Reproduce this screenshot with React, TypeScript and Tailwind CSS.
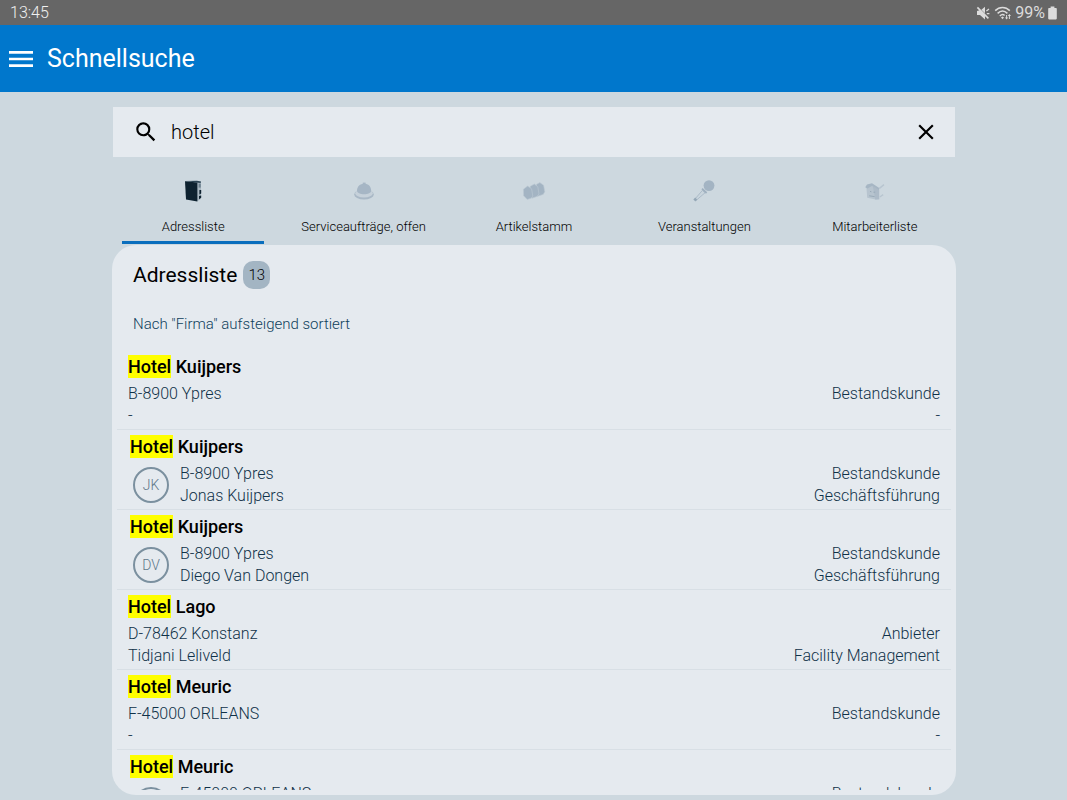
import { useState, type ReactNode } from "react";
import { MdClose, MdMenu, MdSearch } from "react-icons/md";

type Entry = {
  name: string;
  place: string;
  contact: string;
  status: string;
  role: string;
  avatar?: boolean;
  initials?: string;
};

const entries: Entry[] = [
  { name: "Kuijpers", place: "B-8900 Ypres", contact: "-", status: "Bestandskunde", role: "-" },
  {
    name: "Kuijpers",
    place: "B-8900 Ypres",
    contact: "Jonas Kuijpers",
    status: "Bestandskunde",
    role: "Geschäftsführung",
    avatar: true,
    initials: "JK",
  },
  {
    name: "Kuijpers",
    place: "B-8900 Ypres",
    contact: "Diego Van Dongen",
    status: "Bestandskunde",
    role: "Geschäftsführung",
    avatar: true,
    initials: "DV",
  },
  {
    name: "Lago",
    place: "D-78462 Konstanz",
    contact: "Tidjani Leliveld",
    status: "Anbieter",
    role: "Facility Management",
  },
  { name: "Meuric", place: "F-45000 ORLEANS", contact: "-", status: "Bestandskunde", role: "-" },
  {
    name: "Meuric",
    place: "F-45000 ORLEANS",
    contact: "",
    status: "Bestandskunde",
    role: "",
    avatar: true,
  },
];

function BinderIcon() {
  return (
    <svg viewBox="0 0 24 24" className="size-6">
      <path d="M4 2.2 16 2l4 .8v17L16 22.4z" fill="#a9b8c2" />
      <path d="M4 2.2 16.4 3.400v19L5 20.4z" fill="#0e2230" />
      <path d="M4.600 2 16 1.800l4 .8-.4 1.400-4.200-.4z" fill="#2c4454" />
      <path d="M18.400 11h1.800v3.600l-1.800.8zM18 17l2.200-.6v2.400L18 20.200z" fill="#0e2230" />
      <path d="M17.600 4.600h2.200v4h-2.200z" fill="#6f8290" />
    </svg>
  );
}

function BellIcon() {
  return (
    <svg viewBox="0 0 24 24" className="size-6">
      <ellipse cx="12" cy="15.4" rx="9.8" ry="5.2" fill="#a9b8c6" />
      <ellipse cx="12" cy="14.2" rx="8.800" ry="4.400" fill="#c6d1da" />
      <path d="M5 11.600C5.200 7.200 8 4.800 12.200 4.800S19 7.200 19.200 11.600c.2 5-14.200 5-14.200 0z" fill="#a6b6c5" />
      <path d="M10.800 3.600h2.800v2h-2.800z" fill="#a6b6c5" />
    </svg>
  );
}

function PartsIcon() {
  return (
    <svg viewBox="0 0 24 24" className="size-6">
      <g fill="#a3b4c3" stroke="#bcc9d3" strokeWidth=".6">
        <path d="m14.4 5.400 3.400-1.800 3.800 2.600 1.200 6.600-1.600 2.600-6 2z" />
        <path d="m8 7.400 4.400-2.400 3.400 2.800 1.200 7.200-2 2.400-5 1.800z" />
        <path d="m1.400 10.200 4.200-3.200 4 2.800 1.200 7.400-1.600 2-4 1.200-3.600-3.600z" />
      </g>
    </svg>
  );
}

function MicIcon() {
  return (
    <svg viewBox="0 0 24 24" className="size-6">
      <circle cx="17" cy="6.600" r="5.400" fill="#a3b4c3" />
      <path d="m10 9.600 4.600 4.400" stroke="#9fb0bf" strokeWidth="1.800" />
      <path d="m10.400 11.400 2.600 2.400-8.600 7.400-1.400-1.200z" fill="#c9d5dd" stroke="#a3b4c3" strokeWidth=".8" />
      <path d="m1.400 20.600 1.800-2 2 2-1.800 2z" fill="#94a7b6" />
    </svg>
  );
}

function HouseIcon() {
  return (
    <svg viewBox="0 0 24 24" className="size-6">
      <path d="M3.400 7.800 9.400 6l6.400 3.400.4 10.800-3.600.4-8.400-1.800z" fill="#b7c4cf" />
      <path d="m9.400 6 6.800 4.400v9.800l-4 .2L10.800 12z" fill="#adbbc8" />
      <path d="M2.200 8.200 4 5.400l5-1.200 7.600 5-.8 1.600-6.600-4-4.600 2.800z" fill="#a6b6c4" />
      <path d="m16.400 9.400 4.600-3.800M16.800 18l3.400-2.400" stroke="#b8c5d0" strokeWidth="1.400" />
      <path d="m6.200 16.800 5.400.8M7 12.400l1.400.4M10.400 13.200h1.800" stroke="#99aab8" strokeWidth="1" />
    </svg>
  );
}

const tabs: { label: string; icon: ReactNode }[] = [
  { label: "Adressliste", icon: <BinderIcon /> },
  { label: "Serviceaufträge, offen", icon: <BellIcon /> },
  { label: "Artikelstamm", icon: <PartsIcon /> },
  { label: "Veranstaltungen", icon: <MicIcon /> },
  { label: "Mitarbeiterliste", icon: <HouseIcon /> },
];

function StatusBar() {
  return (
    <div className="flex h-[25px] shrink-0 items-center justify-between bg-[#666666] pr-2.5 pl-2.5 text-base text-[#dcdcdc]">
      <span className="font-light text-[#f0f0f0]">13:45</span>
      <div className="flex items-center gap-[3px]">
        {/* muted */}
        <svg viewBox="0 0 16 16" className="size-4" fill="currentColor">
          <path d="M2 6v4h3l5 4.400V9.400L5.400 5zM6.400 4.800 10 1.800v6.400z" />
          <path d="m2.400 2.400 11 11" stroke="currentColor" strokeWidth="1.600" />
          <path d="m11.400 6 2.600-2M11.800 8.600h2.600" stroke="currentColor" strokeWidth="1.200" />
        </svg>
        <svg viewBox="0 0 18 16" className="h-4 w-[18px]" fill="none" stroke="currentColor">
          <path d="M1.200 5.600C5.400 1.400 11.600 1.400 15.800 5.600" strokeWidth="1.500" />
          <path d="M3.600 8.400C6.600 5.400 10.400 5.400 13.400 8.400" strokeWidth="1.500" />
          <path d="M5.800 11C7.600 9.200 9.400 9.200 10.600 10.400" strokeWidth="1.400" />
          <path d="m7 12.400 1.500-1 1.500 1-1.500 1.800z" fill="currentColor" stroke="none" />
          <path d="M12.600 10v3M15.400 10v4" strokeWidth="1" />
          <path d="m11 12.400 1.600 2 1.600-2zM13.800 11l1.600-2 1.600 2z" fill="currentColor" stroke="none" />
        </svg>
        <span>99%</span>
        <svg viewBox="0 0 9 14" className="h-3.5 w-[9px]" fill="currentColor">
          <path d="M2.600.6h3.800V2H8c.5 0 .8.300.8.800v9.800c0 .5-.3.800-.8.800H1c-.5 0-.8-.3-.8-.8V2.800c0-.5.300-.8.800-.8h1.600z" />
        </svg>
      </div>
    </div>
  );
}

function EntryRow({ entry }: { entry: Entry }) {
  const indent = entry.avatar ? "pl-[13px]" : "pl-[11px]";

  return (
    <li className={`flex h-20 flex-col border-b border-[#d8dfe5] pt-1 pr-[11px] ${indent}`}>
      <h3 className="text-lg leading-[26px] font-medium text-black">
        <mark className="bg-[#ffff00] py-px text-black">Hotel</mark> {entry.name}
      </h3>
      <div className="mt-[3px] flex items-center text-base leading-[22px] font-light text-[#0f3148]">
        {entry.avatar && (
          <span className="mr-[11px] ml-[3px] flex size-9 shrink-0 items-center justify-center rounded-full border-2 border-[#7b909f] text-sm text-[#5f788a]">
            {entry.initials}
          </span>
        )}
        <div>
          <p>{entry.place}</p>
          <p className="min-h-[22px]">{entry.contact}</p>
        </div>
        <div className="ml-auto text-right">
          <p>{entry.status}</p>
          <p className="min-h-[22px]">{entry.role}</p>
        </div>
      </div>
    </li>
  );
}

export default function App() {
  const [query, setQuery] = useState("hotel");
  const [active, setActive] = useState(0);

  return (
    <div className="flex h-screen flex-col overflow-hidden bg-[#cdd8df] font-[Roboto,sans-serif]">
      <StatusBar />

      <header className="flex h-[67px] shrink-0 items-center gap-2.5 bg-[#0077cc] pl-[5px] text-white">
        <button type="button" aria-label="Menü öffnen">
          <MdMenu className="size-8" />
        </button>
        <h1 className="text-[25px]">Schnellsuche</h1>
      </header>

      <main className="mr-[107px] ml-[108px] flex min-h-0 flex-1 flex-col pt-[15px] pb-[5px]">
        <div className="mx-[5px] flex h-[50px] shrink-0 items-center bg-[#e5eaef] pr-4 pl-5">
          <label htmlFor="search" aria-label="Suche">
            <MdSearch className="size-[26px] text-black" />
          </label>
          <input
            id="search"
            type="text"
            value={query}
            onChange={(e) => setQuery(e.target.value)}
            className="ml-3 min-w-0 flex-1 bg-transparent text-xl font-light text-black outline-none"
          />
          <button type="button" aria-label="Suche leeren" onClick={() => setQuery("")}>
            <MdClose className="size-[26px] text-black" />
          </button>
        </div>

        <nav className="grid shrink-0 grid-cols-5">
          {tabs.map((tab, i) => (
            <button
              key={tab.label}
              type="button"
              onClick={() => setActive(i)}
              className="flex flex-col items-center px-3.5 pt-[22px]"
            >
              {tab.icon}
              <span className="mt-3.5 text-[13px] leading-5 font-light whitespace-nowrap text-black">{tab.label}</span>
              <span className={`mt-1 h-[3px] w-full ${i === active ? "bg-[#0a6ebd]" : "bg-transparent"}`} />
            </button>
          ))}
        </nav>

        <section className="mx-1 mt-px flex min-h-0 flex-1 flex-col rounded-3xl bg-[#e5eaef] px-[5px] pb-[5px]">
          <div className="flex shrink-0 items-center gap-1.5 px-4 pt-4">
            <h2 className="text-[21px] leading-7 text-black">Adressliste</h2>
            <span className="flex h-7 w-[27px] items-center justify-center rounded-[10px] bg-[#a3b5c3] text-[15px] font-light text-black">
              13
            </span>
          </div>
          <p className="mt-[25px] mb-4 shrink-0 px-4 text-[15px] leading-5 font-light text-[#0f3f5c]">
            Nach "Firma" aufsteigend sortiert
          </p>
          <ul className="min-h-0 flex-1 overflow-hidden">
            {entries.map((entry, i) => (
              <EntryRow key={i} entry={entry} />
            ))}
          </ul>
        </section>
      </main>
    </div>
  );
}
